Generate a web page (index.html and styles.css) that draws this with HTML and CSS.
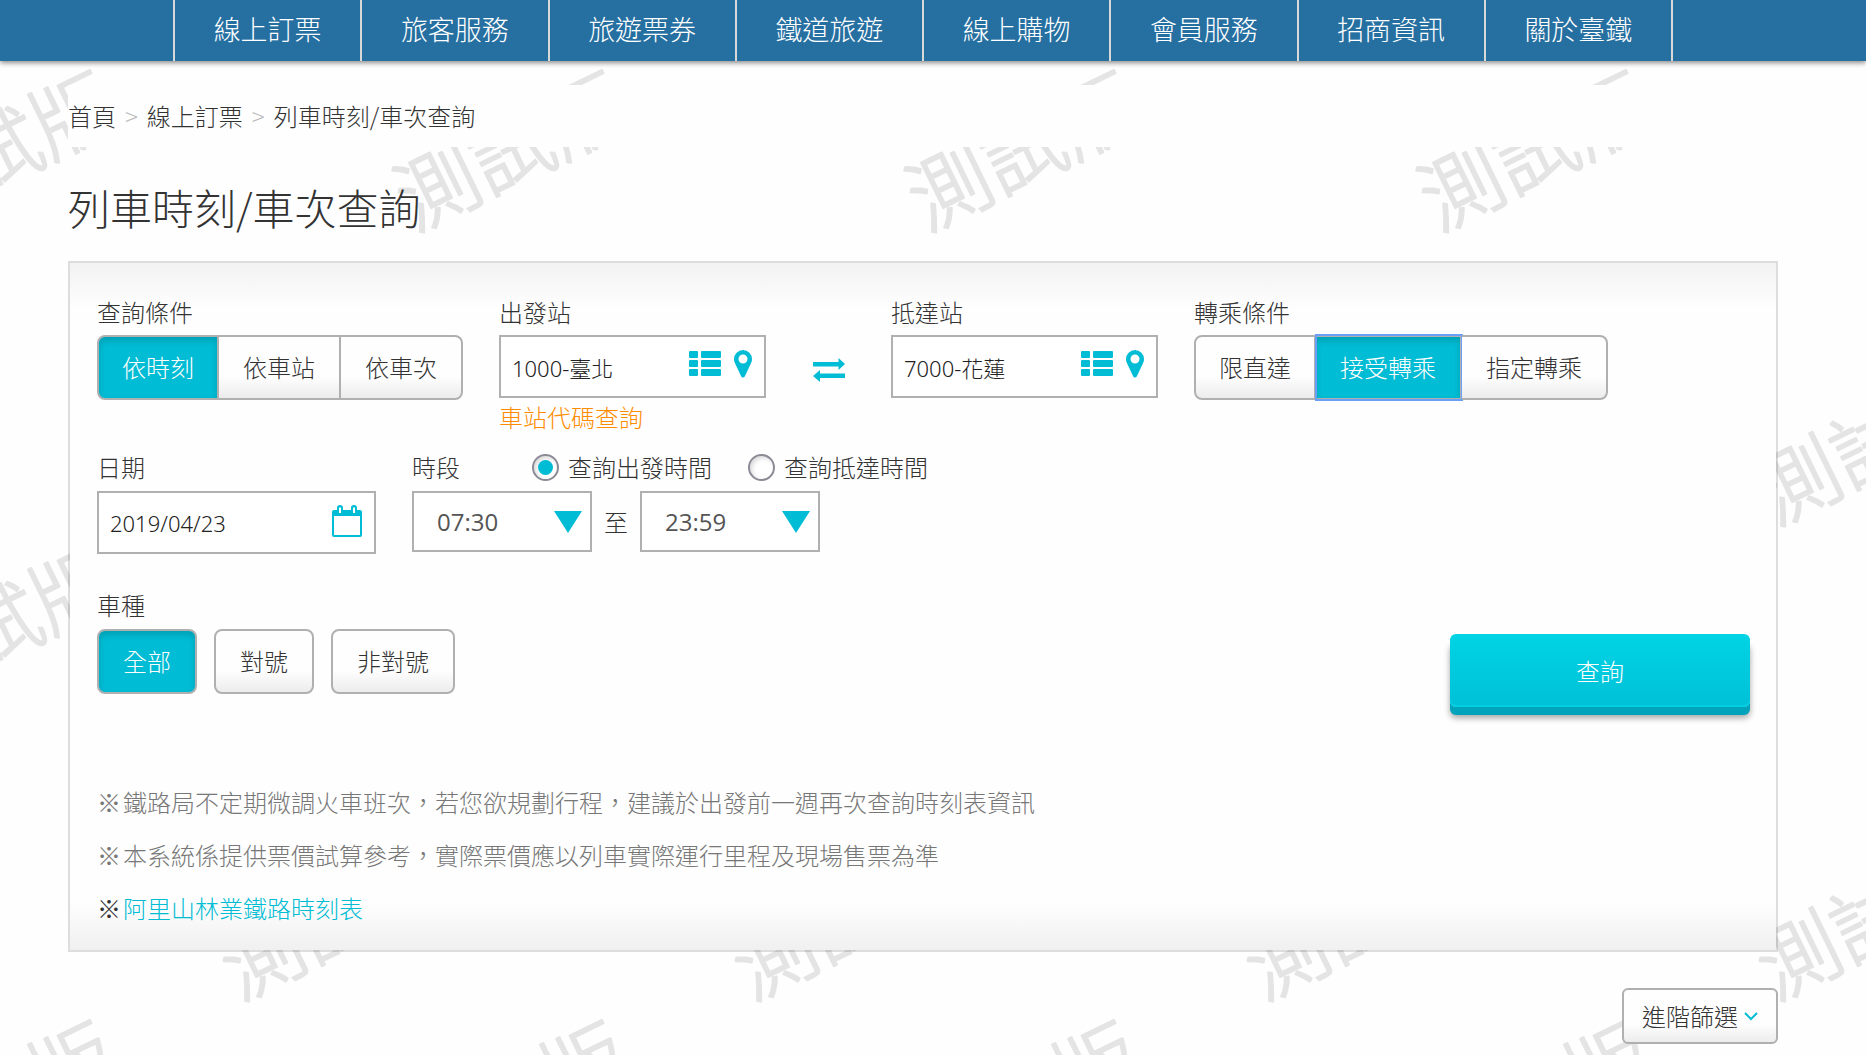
FILE: index.html
```html
<!DOCTYPE html>
<html lang="zh-Hant">
<head>
<meta charset="utf-8">
<meta name="viewport" content="width=device-width, initial-scale=1">
<title>列車時刻/車次查詢</title>
<link rel="stylesheet" href="styles.css">
</head>
<body>
<svg class="watermark" aria-hidden="true">
  <defs>
    <pattern id="mark" x="200" y="60" width="512" height="475" patternUnits="userSpaceOnUse">
      <text class="mark-text" transform="translate(214 172) rotate(-26)">測試版</text>
      <text class="mark-text" transform="translate(39 466) rotate(-26)">測試版</text>
    </pattern>
  </defs>
  <rect width="100%" height="100%" fill="url(#mark)"/>
</svg>

<header class="topbar">
  <nav>
    <ul class="menu">
      <li><a href="#">線上訂票</a></li>
      <li><a href="#">旅客服務</a></li>
      <li><a href="#">旅遊票券</a></li>
      <li><a href="#">鐵道旅遊</a></li>
      <li><a href="#">線上購物</a></li>
      <li><a href="#">會員服務</a></li>
      <li><a href="#">招商資訊</a></li>
      <li><a href="#">關於臺鐵</a></li>
    </ul>
  </nav>
</header>

<main class="page">
  <nav class="crumbs">
    <a href="#">首頁</a><span class="sep">&gt;</span><a href="#">線上訂票</a><span class="sep">&gt;</span><span>列車時刻/車次查詢</span>
  </nav>
  <h1>列車時刻/車次查詢</h1>

  <form class="panel">
    <div class="row row-route">
      <div class="field">
        <span class="label" id="l-cond">查詢條件</span>
        <div class="segment" role="group" aria-labelledby="l-cond">
          <button type="button" class="btn on">依時刻</button>
          <button type="button" class="btn">依車站</button>
          <button type="button" class="btn">依車次</button>
        </div>
      </div>
      <div class="route">
        <div class="field station">
          <label class="label" for="from">出發站</label>
          <div class="box">
            <input id="from" type="text" value="1000-臺北">
            <button type="button" class="icon" aria-label="車站清單"><svg width="32" height="26" viewBox="0 0 32 26"><g fill="currentColor"><rect width="9" height="7" rx="1"/><rect x="12" width="20" height="7" rx="1"/><rect y="9" width="9" height="7" rx="1"/><rect x="12" y="9" width="20" height="7" rx="1"/><rect y="18" width="9" height="7" rx="1"/><rect x="12" y="18" width="20" height="7" rx="1"/></g></svg></button>
            <button type="button" class="icon" aria-label="地圖"><svg width="18" height="28" viewBox="0 0 18 28"><path fill="currentColor" fill-rule="evenodd" d="M9 0a9 9 0 0 1 9 9c0 2-.4 3-1 4.300L11 26q-.7 1.500-2 1.500T7 26L1 13.300C.4 12 0 11 0 9a9 9 0 0 1 9-9zm0 4.500a4.500 4.500 0 1 0 0 9 4.500 4.500 0 0 0 0-9z"/></svg></button>
          </div>
          <a class="code-link" href="#">車站代碼查詢</a>
        </div>
        <button type="button" class="icon swap" aria-label="交換出發站與抵達站"><svg width="32" height="24" viewBox="0 0 32 24"><path fill="currentColor" d="M0 4h25.500V0L32 6l-6.500 6V8.500H0zM32 20H7v4l-7-6 7-6v3.500h25z"/></svg></button>
        <div class="field station">
          <label class="label" for="to">抵達站</label>
          <div class="box">
            <input id="to" type="text" value="7000-花蓮">
            <button type="button" class="icon" aria-label="車站清單"><svg width="32" height="26" viewBox="0 0 32 26"><g fill="currentColor"><rect width="9" height="7" rx="1"/><rect x="12" width="20" height="7" rx="1"/><rect y="9" width="9" height="7" rx="1"/><rect x="12" y="9" width="20" height="7" rx="1"/><rect y="18" width="9" height="7" rx="1"/><rect x="12" y="18" width="20" height="7" rx="1"/></g></svg></button>
            <button type="button" class="icon" aria-label="地圖"><svg width="18" height="28" viewBox="0 0 18 28"><path fill="currentColor" fill-rule="evenodd" d="M9 0a9 9 0 0 1 9 9c0 2-.4 3-1 4.300L11 26q-.7 1.500-2 1.500T7 26L1 13.300C.4 12 0 11 0 9a9 9 0 0 1 9-9zm0 4.500a4.500 4.500 0 1 0 0 9 4.500 4.500 0 0 0 0-9z"/></svg></button>
          </div>
        </div>
      </div>
      <div class="field">
        <span class="label" id="l-transfer">轉乘條件</span>
        <div class="segment" role="group" aria-labelledby="l-transfer">
          <button type="button" class="btn">限直達</button>
          <button type="button" class="btn on focused">接受轉乘</button>
          <button type="button" class="btn">指定轉乘</button>
        </div>
      </div>
    </div>

    <div class="row row-time">
      <div class="field date">
        <label class="label" for="date">日期</label>
        <div class="box">
          <input id="date" type="text" value="2019/04/23">
          <button type="button" class="icon" aria-label="選擇日期"><svg width="30" height="32" viewBox="0 0 30 32"><path fill="currentColor" fill-rule="evenodd" d="M2 5h3V3q0-3 3-3t3 3v2h8V3q0-3 3-3t3 3v2h3q2 0 2 2v23q0 2-2 2H2q-2 0-2-2V7q0-2 2-2zm0 6v19h26V11zM7 2.500V8h2V2.500zm14 0V8h2V2.500z"/></svg></button>
        </div>
      </div>
      <div class="field">
        <div class="period-head">
          <label class="label" for="start">時段</label>
          <label class="radio"><input type="radio" name="mode" checked>查詢出發時間</label>
          <label class="radio"><input type="radio" name="mode">查詢抵達時間</label>
        </div>
        <div class="period">
          <div class="pick"><select id="start"><option>07:30</option></select><svg width="28" height="22" viewBox="0 0 28 22" aria-hidden="true"><path fill="currentColor" d="M0 0h28L14 22z"/></svg></div>
          <label for="end">至</label>
          <div class="pick"><select id="end"><option>23:59</option></select><svg width="28" height="22" viewBox="0 0 28 22" aria-hidden="true"><path fill="currentColor" d="M0 0h28L14 22z"/></svg></div>
        </div>
      </div>
    </div>

    <div class="row row-type">
      <div class="field">
        <span class="label" id="l-type">車種</span>
        <div class="types" role="group" aria-labelledby="l-type">
          <button type="button" class="btn on">全部</button>
          <button type="button" class="btn">對號</button>
          <button type="button" class="btn">非對號</button>
        </div>
      </div>
      <button type="submit" class="search">查詢</button>
    </div>

    <ul class="notes">
      <li><span>※</span><span>鐵路局不定期微調火車班次，若您欲規劃行程，建議於出發前一週再次查詢時刻表資訊</span></li>
      <li><span>※</span><span>本系統係提供票價試算參考，實際票價應以列車實際運行里程及現場售票為準</span></li>
      <li class="strong"><span>※</span><a href="#">阿里山林業鐵路時刻表</a></li>
    </ul>
  </form>

  <div class="more">
    <button type="button" class="advanced">進階篩選<svg width="14" height="9" viewBox="0 0 14 9" aria-hidden="true"><path fill="none" stroke="#00bcd4" stroke-width="2" d="M1 1l6 6 6-6"/></svg></button>
  </div>
</main>
</body>
</html>
```
FILE: styles.css
```css
* {
  box-sizing: border-box;
}

body {
  position: relative;
  min-height: 100vh;
  margin: 0;
  padding-bottom: 20px;
  background: #fefefe;
  color: #333;
  font: 300 24px/32px "Noto Sans CJK TC", sans-serif;
}

button,
input,
select {
  margin: 0;
  font: inherit;
  color: inherit;
}

button {
  cursor: pointer;
}

a {
  color: inherit;
  text-decoration: none;
}

svg {
  display: block;
}

.watermark {
  position: absolute;
  inset: 0;
  z-index: -1;
  width: 100%;
  height: 100%;
}

.mark-text {
  fill: #e4e4e4;
  stroke: #e4e4e4;
  stroke-width: 2px;
  stroke-linejoin: round;
  font-size: 82px;
  font-weight: 300;
}

/* top menu */
.topbar {
  padding-right: 20px;
  background: #256fa1;
  box-shadow: 0 2px 5px rgba(0, 0, 0, .45);
}

.menu {
  display: flex;
  max-width: 1500px;
  margin: 0 auto;
  padding: 0;
  border-right: 2px solid #d8d8d8;
  list-style: none;
}

.menu li {
  flex: 1;
  border-left: 2px solid #d8d8d8;
}

.menu a {
  display: block;
  padding-bottom: 3px;
  color: #fff;
  font-size: 27px;
  line-height: 58px;
  text-align: center;
}

.page {
  padding: 24px 88px 0 68px;
}

.crumbs {
  display: flex;
  height: 62px;
  align-items: center;
  background: #fefefe;
}

.sep {
  margin: 0 9px;
  color: #bbb;
}

h1 {
  margin: 31px 0 25px;
  font-size: 42px;
  font-weight: 300;
  line-height: 58px;
}

/* search panel */
.panel {
  padding: 33px 26px 16px 27px;
  border: 2px solid rgba(0, 0, 0, .13);
  background: linear-gradient(#f2f2f2, #fefefe 45px, #fefefe calc(100% - 48px), #f0f0f0);
  background-clip: padding-box;
}

.row {
  display: flex;
  align-items: flex-start;
  gap: 36px;
}

.row-time {
  margin-top: 18px;
}

.row-type {
  justify-content: space-between;
  margin-top: 35px;
}

.label {
  display: block;
  margin-bottom: 7px;
}

.row-time .label,
.row-type .label {
  margin-bottom: 8px;
}

.segment,
.types {
  display: flex;
}

.types {
  gap: 17px;
}

.btn {
  height: 65px;
  padding: 0 24px 2px;
  border: 2px solid #b0b0b0;
  border-radius: 8px;
  background: linear-gradient(#fefefe 65%, #ececec);
}

.segment .btn {
  border-left-width: 0;
  border-radius: 0;
}

.segment .btn:first-child {
  padding-right: 23px;
  padding-left: 23px;
  border-left-width: 2px;
  border-radius: 8px 0 0 8px;
}

.segment .btn:last-child {
  border-radius: 0 8px 8px 0;
}

.btn.on {
  background: #00bcd4;
  box-shadow: inset 0 4px 6px rgba(0, 0, 0, .15);
  color: #fff;
}

.btn.focused {
  outline: 2px solid #6a9ff5;
  outline-offset: -1px;
}

.route {
  display: flex;
  align-items: flex-start;
}

.box {
  display: flex;
  width: 267px;
  height: 63px;
  padding: 0 12px 0 11px;
  border: 2px solid #b0b0b0;
  background: #fff;
  align-items: center;
}

.box input {
  flex: 1;
  min-width: 0;
  height: 100%;
  padding: 1px 0 0;
  border: 0;
  background: none;
  color: #222;
  font: 300 22px "Noto Sans", "Noto Sans CJK TC", sans-serif;
  outline: 0;
}

.icon {
  padding: 0;
  border: 0;
  background: none;
  color: #00bcd4;
}

.station .box .icon {
  margin: 0 0 5px 12px;
}

.station .box .icon:first-of-type {
  margin-right: 1px;
}

.swap {
  margin: 62px 46px 0 47px;
}

.code-link {
  display: block;
  margin-top: 3px;
  color: #ff8c00;
}

.date .box {
  width: 279px;
}

.date .icon {
  margin-bottom: 4px;
}

.period-head {
  display: flex;
}

.radio {
  display: flex;
  align-items: center;
  height: 32px;
  margin-left: 36px;
  gap: 9px;
}

.label + .radio {
  margin-left: 72px;
}

.radio input {
  display: grid;
  width: 27px;
  height: 27px;
  border: 2px solid #8b8b96;
  border-radius: 50%;
  background: #fff;
  box-shadow: inset 2px 2px 4px rgba(0, 0, 0, .15);
  appearance: none;
  place-content: center;
}

.radio input:checked::before {
  width: 15px;
  height: 15px;
  border-radius: 50%;
  background: #00bcd4;
  content: "";
}

.period {
  display: flex;
  align-items: center;
  gap: 12px;
}

.pick {
  position: relative;
  width: 180px;
}

.pick select {
  display: block;
  width: 100%;
  height: 61px;
  padding: 0 23px;
  border: 2px solid #b0b0b0;
  border-radius: 0;
  background: #fff;
  color: #555;
  font: 400 24px "Open Sans", sans-serif;
  appearance: none;
}

.pick svg {
  position: absolute;
  top: 20px;
  right: 10px;
  color: #00bcd4;
  pointer-events: none;
}

.search {
  width: 300px;
  height: 73px;
  margin: 45px 0 8px;
  border: 0;
  border-radius: 6px;
  background: linear-gradient(#00d4e4, #00c0d8);
  box-shadow: inset 0 -2px #00cfe2, 0 8px #00a3ba, 0 11px 6px rgba(0, 0, 0, .35);
  color: #fff;
}

.notes {
  margin: 60px 0 0;
  padding: 0;
  color: #777;
  line-height: 53px;
  list-style: none;
}

.notes li {
  display: flex;
  gap: 2px;
}

.notes .strong {
  color: #333;
}

.notes a {
  color: #00bcd4;
}

.more {
  display: flex;
  justify-content: flex-end;
  margin-top: 36px;
}

.advanced {
  display: flex;
  height: 56px;
  padding: 0 18px;
  border: 2px solid #b0b0b0;
  border-radius: 6px;
  background: linear-gradient(#fefefe 65%, #ececec);
  align-items: center;
  gap: 6px;
}
```
